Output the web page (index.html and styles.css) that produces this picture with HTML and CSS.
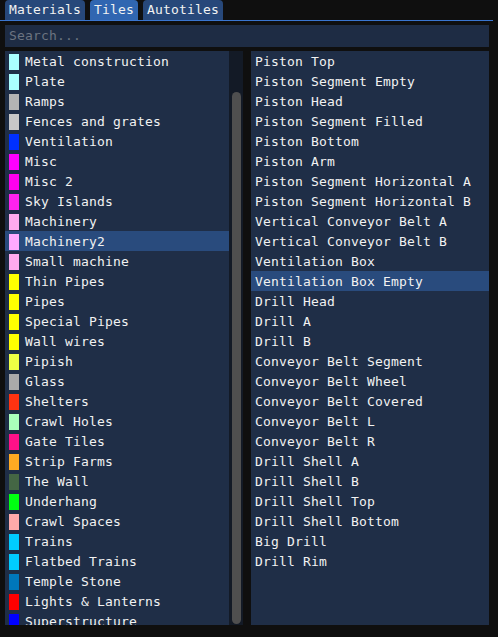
FILE: index.html
```html
<!DOCTYPE html>
<html>
<head>
<meta charset="utf-8">
<link rel="stylesheet" href="styles.css">
</head>
<body>
<div class="tabbar">
  <div class="tab">Materials</div>
  <div class="tab active">Tiles</div>
  <div class="tab">Autotiles</div>
</div>
<div class="search">Search...</div>
<div class="lists">
  <div class="panel left">
    <div class="list">
      <div class="row"><span class="sw" style="background:#aaffff"></span>Metal construction</div>
      <div class="row"><span class="sw" style="background:#aaffff"></span>Plate</div>
      <div class="row"><span class="sw" style="background:#b4b4b4"></span>Ramps</div>
      <div class="row"><span class="sw" style="background:#c8c8c8"></span>Fences and grates</div>
      <div class="row"><span class="sw" style="background:#0030ff"></span>Ventilation</div>
      <div class="row"><span class="sw" style="background:#ff00ff"></span>Misc</div>
      <div class="row"><span class="sw" style="background:#ff00ee"></span>Misc 2</div>
      <div class="row"><span class="sw" style="background:#ff22ee"></span>Sky Islands</div>
      <div class="row"><span class="sw" style="background:#ffaaee"></span>Machinery</div>
      <div class="row sel"><span class="sw" style="background:#ffaaff"></span>Machinery2</div>
      <div class="row"><span class="sw" style="background:#ffaaee"></span>Small machine</div>
      <div class="row"><span class="sw" style="background:#ffff00"></span>Thin Pipes</div>
      <div class="row"><span class="sw" style="background:#ffff00"></span>Pipes</div>
      <div class="row"><span class="sw" style="background:#ffff00"></span>Special Pipes</div>
      <div class="row"><span class="sw" style="background:#ffff00"></span>Wall wires</div>
      <div class="row"><span class="sw" style="background:#eeff44"></span>Pipish</div>
      <div class="row"><span class="sw" style="background:#aaaaaa"></span>Glass</div>
      <div class="row"><span class="sw" style="background:#ff3311"></span>Shelters</div>
      <div class="row"><span class="sw" style="background:#aaffbb"></span>Crawl Holes</div>
      <div class="row"><span class="sw" style="background:#ff1188"></span>Gate Tiles</div>
      <div class="row"><span class="sw" style="background:#ffaa22"></span>Strip Farms</div>
      <div class="row"><span class="sw" style="background:#446644"></span>The Wall</div>
      <div class="row"><span class="sw" style="background:#00ff11"></span>Underhang</div>
      <div class="row"><span class="sw" style="background:#ffaaaa"></span>Crawl Spaces</div>
      <div class="row"><span class="sw" style="background:#00ccff"></span>Trains</div>
      <div class="row"><span class="sw" style="background:#00ccff"></span>Flatbed Trains</div>
      <div class="row"><span class="sw" style="background:#0077bb"></span>Temple Stone</div>
      <div class="row"><span class="sw" style="background:#ff0000"></span>Lights &amp; Lanterns</div>
      <div class="row"><span class="sw" style="background:#0000ff"></span>Superstructure</div>
    </div>
    <div class="track"><div class="thumb"></div></div>
  </div>
  <div class="panel right">
    <div class="list">
      <div class="row">Piston Top</div>
      <div class="row">Piston Segment Empty</div>
      <div class="row">Piston Head</div>
      <div class="row">Piston Segment Filled</div>
      <div class="row">Piston Bottom</div>
      <div class="row">Piston Arm</div>
      <div class="row">Piston Segment Horizontal A</div>
      <div class="row">Piston Segment Horizontal B</div>
      <div class="row">Vertical Conveyor Belt A</div>
      <div class="row">Vertical Conveyor Belt B</div>
      <div class="row">Ventilation Box</div>
      <div class="row sel">Ventilation Box Empty</div>
      <div class="row">Drill Head</div>
      <div class="row">Drill A</div>
      <div class="row">Drill B</div>
      <div class="row">Conveyor Belt Segment</div>
      <div class="row">Conveyor Belt Wheel</div>
      <div class="row">Conveyor Belt Covered</div>
      <div class="row">Conveyor Belt L</div>
      <div class="row">Conveyor Belt R</div>
      <div class="row">Drill Shell A</div>
      <div class="row">Drill Shell B</div>
      <div class="row">Drill Shell Top</div>
      <div class="row">Drill Shell Bottom</div>
      <div class="row">Big Drill</div>
      <div class="row">Drill Rim</div>
    </div>
  </div>
</div>
</body>
</html>
```
FILE: styles.css
```css
html, body {
  margin: 0;
  padding: 0;
  background: #0f0f0f;
  width: 498px;
  height: 637px;
  overflow: hidden;
  font-family: "DejaVu Sans Mono", "Liberation Mono", monospace;
  font-size: 13px;
  letter-spacing: 0.17px;
  color: #f2f2f2;
}

.tabbar {
  display: flex;
  gap: 5px;
  padding-left: 5px;
  height: 20px;
  width: 488px;
  border-bottom: 1px solid #3a76d0;
}

.tab {
  height: 20px;
  line-height: 20px;
  padding: 0 4px;
  background: #27487a;
  border-radius: 4px 4px 0 0;
  white-space: nowrap;
}

.tab.active {
  background: #3066b1;
}

.search {
  margin: 4px 9px 0 5px;
  height: 22px;
  line-height: 22px;
  padding-left: 4px;
  background: #1e2c44;
  color: #6c7481;
}

.lists {
  display: grid;
  grid-template-columns: 238px 238px;
  gap: 8px;
  margin: 4px 0 0 5px;
  height: 574px;
}

.panel {
  background: #1f2e47;
  overflow: hidden;
  display: flex;
}

.list {
  flex: 1;
  min-width: 0;
}

.row {
  box-sizing: border-box;
  height: 20px;
  padding: 1px 0 0 4px;
  line-height: 19px;
  white-space: nowrap;
  display: flex;
  align-items: center;
}

.left .row .sw {
  width: 10px;
  height: 16px;
  margin-right: 6px;
  flex: none;
}

.row.sel {
  background: #294b7d;
}

.track {
  width: 14px;
  flex: none;
  background: #131a26;
  padding-top: 41px;
  box-sizing: border-box;
}

.thumb {
  width: 9px;
  margin-left: 3px;
  height: 532px;
  background: #4f4f4f;
  border-radius: 5px;
}
```
